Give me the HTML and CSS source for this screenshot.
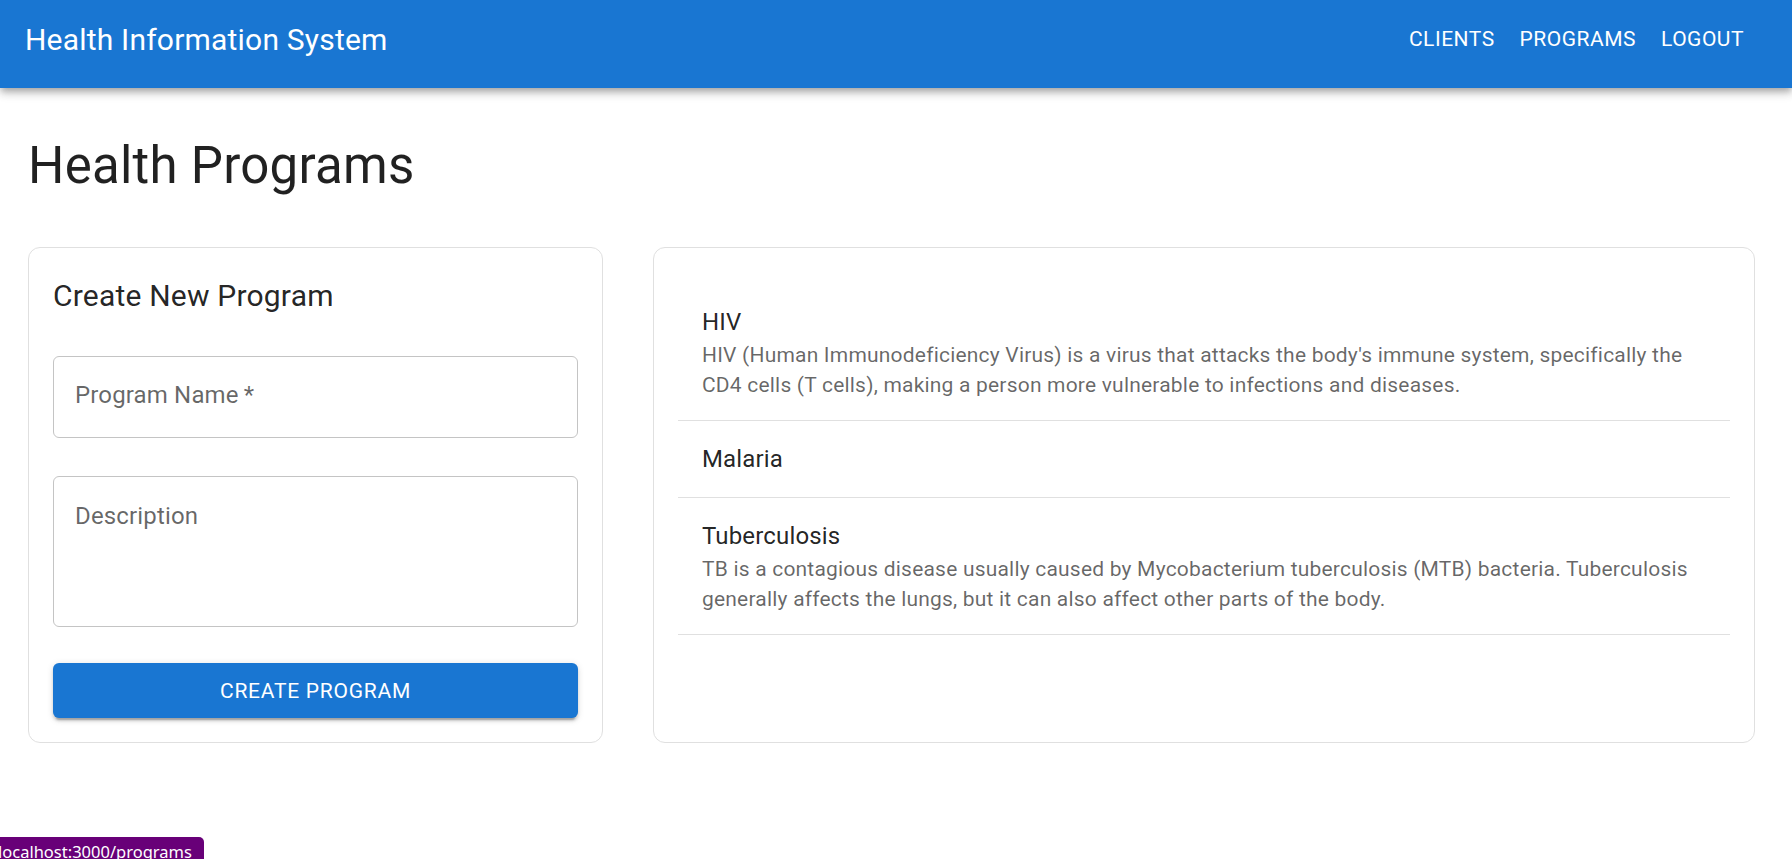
FILE: index.html
```html
<!DOCTYPE html>
<html lang="en">
<head>
<meta charset="utf-8">
<title>Health Information System</title>
<link rel="stylesheet" href="styles.css">
</head>
<body>
<header class="appbar">
  <div class="toolbar">
    <div class="brand">Health Information System</div>
    <nav class="nav">
      <a class="nav-btn" href="#">Clients</a>
      <a class="nav-btn" href="#">Programs</a>
      <a class="nav-btn" href="#">Logout</a>
    </nav>
  </div>
</header>

<main class="main">
  <h1 class="page-title">Health Programs</h1>
  <div class="grid">
    <section class="card create-card">
      <h2 class="card-title">Create New Program</h2>
      <input class="field field-name" type="text" placeholder="Program Name&#8201;*">
      <textarea class="field field-desc" placeholder="Description"></textarea>
      <button class="btn-primary" type="button">Create Program</button>
    </section>

    <section class="card list-card">
      <ul class="list">
        <li class="list-item">
          <div class="primary">HIV</div>
          <div class="secondary">HIV (Human Immunodeficiency Virus) is a virus that attacks the body's immune system, specifically the CD4 cells (T cells), making a person more vulnerable to infections and diseases.</div>
        </li>
        <li class="list-item">
          <div class="primary">Malaria</div>
        </li>
        <li class="list-item">
          <div class="primary">Tuberculosis</div>
          <div class="secondary">TB is a contagious disease usually caused by Mycobacterium tuberculosis (MTB) bacteria. Tuberculosis generally affects the lungs, but it can also affect other parts of the body.</div>
        </li>
      </ul>
    </section>
  </div>
</main>

<div class="status-bubble">localhost:3000/programs</div>
</body>
</html>
```
FILE: styles.css
```css
* {
  box-sizing: border-box;
}

html,
body {
  margin: 0;
  padding: 0;
}

body {
  width: 1792px;
  height: 859px;
  overflow: hidden;
  position: relative;
  background: #ffffff;
  color: rgba(0, 0, 0, 0.87);
  font-family: Roboto, "Helvetica Neue", Arial, sans-serif;
}

/* ---------- App bar ---------- */
.appbar {
  position: relative;
  z-index: 1;
  height: 88px;
  background: #1976d2;
  color: #ffffff;
  box-shadow: 0 3px 6px -1.5px rgba(0, 0, 0, 0.2),
    0 6px 7.5px 0 rgba(0, 0, 0, 0.14),
    0 1.5px 15px 0 rgba(0, 0, 0, 0.12);
}

.toolbar {
  height: 79px;
  display: flex;
  align-items: center;
  padding: 0 36px 0 25px;
}

.brand {
  flex: 1;
  font-size: 30px;
  line-height: 48px;
  font-weight: 400;
  letter-spacing: 0.2px;
}

.nav {
  display: flex;
  gap: 1px;
}

.nav-btn {
  display: block;
  padding: 9px 12px;
  color: #ffffff;
  text-decoration: none;
  text-transform: uppercase;
  font-size: 21px;
  line-height: 36.75px;
  font-weight: 400;
  letter-spacing: 0.5px;
}

/* ---------- Main ---------- */
.main {
  padding: 0 37px 0 28px;
}

.page-title {
  margin: 46px 0 50px;
  font-size: 51px;
  line-height: 63px;
  font-weight: 400;
  letter-spacing: 0.25px;
}

.grid {
  display: grid;
  grid-template-columns: 575px 1fr;
  column-gap: 50px;
}

.card {
  border: 1px solid #e0e0e0;
  border-radius: 12px;
  padding: 24px;
  background: #ffffff;
}

/* ---------- Create card ---------- */
.create-card {
  display: flex;
  flex-direction: column;
}

.card-title {
  margin: 0 0 10.5px;
  font-size: 30px;
  line-height: 48px;
  font-weight: 400;
  letter-spacing: 0.2px;
}

.field {
  display: block;
  width: 100%;
  border: 1px solid #c4c4c4;
  border-radius: 6px;
  font-family: inherit;
  font-size: 24px;
  line-height: 33px;
  color: rgba(0, 0, 0, 0.87);
  background: #ffffff;
  outline: none;
  letter-spacing: 0.15px;
}

.field::placeholder {
  color: rgba(0, 0, 0, 0.6);
  opacity: 1;
}

.field-name {
  margin-top: 25px;
  height: 82px;
  padding: 22px 21px 25px;
}

.field-desc {
  margin-top: 38px;
  height: 151px;
  padding: 23px 21px;
  resize: none;
}

.btn-primary {
  display: block;
  width: 100%;
  height: 55px;
  margin-top: 36.5px;
  border: none;
  border-radius: 6px;
  background: #1976d2;
  color: #ffffff;
  font-family: inherit;
  font-size: 21px;
  font-weight: 400;
  letter-spacing: 0.75px;
  text-transform: uppercase;
  box-shadow: 0 4.5px 1.5px -3px rgba(0, 0, 0, 0.2),
    0 3px 3px 0 rgba(0, 0, 0, 0.14),
    0 1.5px 7.5px 0 rgba(0, 0, 0, 0.12);
}

/* ---------- Program list ---------- */
.list {
  list-style: none;
  margin: 0;
  padding: 12px 0 0;
}

.list-item {
  padding: 20px 24px;
  border-bottom: 1px solid #e0e0e0;
}

.primary {
  font-size: 24px;
  line-height: 36px;
  color: rgba(0, 0, 0, 0.87);
  letter-spacing: 0.15px;
}

.secondary {
  font-size: 21px;
  line-height: 30px;
  color: rgba(0, 0, 0, 0.6);
  letter-spacing: 0.2px;
}

/* ---------- Browser status bubble ---------- */
.status-bubble {
  position: absolute;
  left: 0;
  bottom: 0;
  height: 22px;
  padding: 0 12px 0 0;
  text-indent: -2px;
  background: #680078;
  color: #ffffff;
  border-top-right-radius: 5px;
  font-family: "Noto Sans", "Open Sans", sans-serif;
  font-size: 16.5px;
  line-height: 29px;
  white-space: nowrap;
  overflow: hidden;
}
```
